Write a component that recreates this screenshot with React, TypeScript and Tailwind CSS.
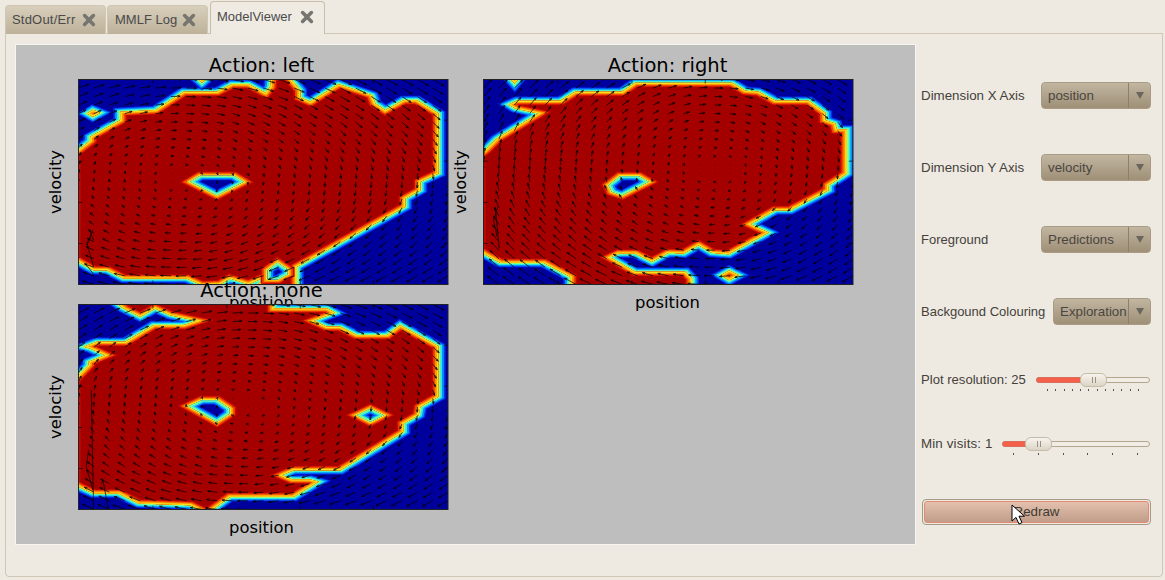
import { useId } from "react"

const BLUE = "#00009c"
const RED = "#a40000"
// colour bands of the jet map, going from the warm side to the cold side of a contour
const warmBands = ["#c80800", "#f04800", "#ff9800", "#f8e020"]
const coldBands = ["#0030f0", "#0090ff", "#30e8e0", "#90ff80"]
// grid cells are wider than tall, so bands get wider on vertical edges
const X_STRETCH = 1.6

function Contour({ points, hole = false }: { points: string; hole?: boolean }) {
  const id = useId()
  const outer = hole ? warmBands : coldBands
  const inner = hole ? coldBands : warmBands
  const widths = [26, 20, 13, 6.5]
  const scaled = points
    .split(" ")
    .map((p) => {
      const [x, y] = p.split(",").map(Number)
      return `${(x / X_STRETCH).toFixed(1)},${y}`
    })
    .join(" ")
  return (
    <g transform={`scale(${X_STRETCH} 1)`}>
      {outer.map((c, i) => (
        <polygon key={c} points={scaled} fill="none" stroke={c} strokeWidth={widths[i]} strokeLinejoin="miter" />
      ))}
      <clipPath id={id}>
        <polygon points={scaled} />
      </clipPath>
      <polygon points={scaled} fill={hole ? BLUE : RED} />
      <g clipPath={`url(#${id})`}>
        {inner.map((c, i) => (
          <polygon key={c} points={scaled} fill="none" stroke={c} strokeWidth={widths[i]} strokeLinejoin="miter" />
        ))}
      </g>
    </g>
  )
}

// quiver field: clockwise swirl around (cx, cy), vertical speed levels off at cap
function quiverPath(cx: number, cy: number, a: number, b: number, cap: number) {
  let d = ""
  for (let i = 0; i < 25; i++) {
    for (let j = 0; j < 25; j++) {
      const x = 25 + i * 46.2
      const y = 28 + j * 25.6
      const vx = -(y - cy) * a
      const vy = cap * Math.tanh(((x - cx) * b) / cap)
      const len = Math.hypot(vx, vy)
      if (len < 3) {
        d += `M${x} ${y}h2`
        continue
      }
      const ux = vx / len
      const uy = vy / len
      const ex = x + vx
      const ey = y + vy
      const hx = ex - ux * 8
      const hy = ey - uy * 8
      d += `M${x.toFixed(1)} ${y.toFixed(1)}L${ex.toFixed(1)} ${ey.toFixed(1)}`
      d += `M${(hx - uy * 3).toFixed(1)} ${(hy + ux * 3).toFixed(1)}L${ex.toFixed(1)} ${ey.toFixed(1)}L${(hx + uy * 3).toFixed(1)} ${(hy - ux * 3).toFixed(1)}`
    }
  }
  return d
}

const xTicks = [248, 470, 690, 910]
const yTicks = [150, 273, 397, 520]

type PlotProps = {
  x: number
  y: number
  title: string
  region: string
  islands: string[]
  holes: string[]
  swirl: [number, number, number, number, number]
  longArrows: string
  shift?: number
  labelX?: number
}

function Plot({ x, y, title, region, islands, holes, swirl, longArrows, shift = 0, labelX = 183 }: PlotProps) {
  const ticks =
    xTicks.map((t) => `M${t} 28v12M${t} 643v-12`).join("") + yTicks.map((t) => `M25 ${t}h12M1133 ${t}h-12`).join("")
  return (
    <g>
      <svg x={x} y={y} width={369.5} height={205} viewBox="25 28 1108 615">
        <rect x="0" y="0" width="1200" height="700" fill={BLUE} />
        <g transform={`translate(0 ${-shift})`}>
          <Contour points={region} />
          {islands.map((p) => (
            <Contour key={p} points={p} />
          ))}
          {holes.map((p) => (
            <Contour key={p} points={p} hole />
          ))}
        </g>
        <path d={quiverPath(...swirl)} stroke="#000" strokeWidth="2.2" fill="none" />
        <g transform={`translate(0 ${-shift})`}>
          <path d={longArrows} stroke="#000" strokeWidth="2.2" fill="none" />
        </g>
        <path d={ticks} stroke="#000" strokeWidth="2" fill="none" />
      </svg>
      <rect x={x} y={y} width={369.5} height={205} fill="none" stroke="#222" strokeWidth="1" />
      <text
        x={x + labelX}
        y={y - 8}
        textAnchor="middle"
        fontSize="19.5"
        fill="#000"
        fontFamily="'DejaVu Sans', sans-serif"
      >
        {title}
      </text>
      <text
        x={x + labelX}
        y={y + 228}
        textAnchor="middle"
        fontSize="16.4"
        fill="#000"
        fontFamily="'DejaVu Sans', sans-serif"
      >
        position
      </text>
    </g>
  )
}

function YLabel({ x, y }: { x: number; y: number }) {
  return (
    <text
      transform={`translate(${x} ${y}) rotate(-90)`}
      textAnchor="middle"
      fontSize="16.4"
      fill="#000"
      fontFamily="'DejaVu Sans', sans-serif"
    >
      velocity
    </text>
  )
}

function CloseIcon() {
  return (
    <svg width="14" height="14" viewBox="0 0 14 14" className="shrink-0">
      <path d="M2.6 2.6 11.4 11.4M11.4 2.6 2.6 11.4" stroke="#77756f" strokeWidth="3.6" strokeLinecap="round" />
    </svg>
  )
}

function Tab({ label, box, active = false }: { label: string; box: string; active?: boolean }) {
  return (
    <div
      className={`flex items-center justify-between rounded-t-[4px] border border-b-0 ${box} ${
        active
          ? "h-[33px] border-[#c9bfa9] bg-[#efebe3] pb-[3px]"
          : "h-[29px] border-[#cfc6b4] bg-gradient-to-b from-[#d8cfbc] to-[#bdb199]"
      }`}
    >
      <span className="text-[13px] text-[#4a4a4a]">{label}</span>
      <CloseIcon />
    </div>
  )
}

function Select({ value, width = "w-[110px]" }: { value: string; width?: string }) {
  return (
    <div
      className={`mb-[1px] flex h-[27px] ${width} items-stretch rounded-[4px] border border-[#a89c87] bg-gradient-to-b from-[#c2b6a1] to-[#9f8f77] text-[13.33px] text-[#4a4640]`}
    >
      <div className="flex flex-1 items-center overflow-hidden whitespace-nowrap pl-[6px]">{value}</div>
      <div className="flex w-[22px] items-center justify-center border-l border-[#8d806b]">
        <svg width="10" height="9" viewBox="0 0 10 9">
          <path d="M1 1h8L5 8z" fill="#6a665c" />
        </svg>
      </div>
    </div>
  )
}

function Row({ label, labelClass = "text-[13.33px]", children }: { label: string; labelClass?: string; children: React.ReactNode }) {
  return (
    <div className="flex h-[72px] items-center justify-between text-[#45413a]">
      <span className={labelClass}>{label}</span>
      {children}
    </div>
  )
}

function Slider({
  label,
  labelClass,
  height,
  width,
  fill,
  thumb,
  ticks,
  tickInset,
}: {
  label: string
  labelClass: string
  height: string
  width: string
  fill: string
  thumb: string
  ticks: number
  tickInset: string
}) {
  return (
    <div className={`flex ${height} items-center justify-between pr-[1px] text-[#45413a]`}>
      <span className={labelClass}>{label}</span>
      <div className={`relative ${width} h-[6px]`}>
        <div className="h-[6px] rounded-[3px] border border-[#b3a78f] bg-[#f1ede4]" />
        <div className={`absolute left-0 top-0 h-[6px] ${fill} rounded-l-[3px] border border-[#d9705a] bg-[#f4604a]`} />
        <div
          className={`absolute top-1/2 ${thumb} flex h-[14px] w-[27px] -translate-y-1/2 items-center justify-center gap-[2px] rounded-[6px] border border-[#c6bba6] bg-gradient-to-b from-[#f7f4ee] to-[#dcd5c6]`}
        >
          <span className="h-[6px] w-px bg-[#9a9181]" />
          <span className="h-[6px] w-px bg-[#9a9181]" />
        </div>
        <div className={`absolute top-[12px] flex ${tickInset} justify-between`}>
          {Array.from({ length: ticks }).map((_, i) => (
            <span key={i} className="h-[2px] w-px bg-[#55514a]" />
          ))}
        </div>
      </div>
    </div>
  )
}

export default function App() {
  return (
    <div className="flex h-[580px] w-[1165px] flex-col overflow-hidden bg-[#eeeae2] font-['Liberation_Sans',sans-serif]">
      {/* Tabs */}
      <div className="z-10 -mb-px flex h-[34px] items-end pl-[5px]">
        <Tab label="StdOut/Err" box="w-[101px] pl-[6px] pr-[9px] tracking-[0.2px]" />
        <Tab label="MMLF Log" box="ml-[1px] w-[101px] pl-[7px] pr-[11px]" />
        <Tab label="ModelViewer" box="ml-[2px] w-[115px] pl-[6px] pr-[10px]" active />
      </div>

      {/* Panel */}
      <div className="mb-[3px] ml-[5px] mr-[2px] flex flex-1 rounded-b-[4px] border border-[#cfc6b4] pl-[10px] pt-[11px]">
        <div className="h-[499px] w-[899px] bg-[#bebebe] outline outline-1 outline-[#f7f5f0]">
          <svg width="899" height="499" className="block">
            <Plot
              x={62.5}
              y={34.5}
              title="Action: left"
              region="10,250 60,212 60,200 150,150 150,125 255,120 340,65 440,65 485,42 535,42 585,68 600,50 603,10 648,10 690,60 690,82 720,95 805,42 905,75 915,100 945,120 1000,90 1040,90 1105,130 1105,310 1050,335 1050,360 1005,385 1005,410 680,590 680,660 545,660 590,618 535,642 480,625 450,642 395,645 350,625 160,625 110,600 70,600 25,575 10,565"
              islands={["50,130 68,119 90,128 68,140", "375,20 395,38 415,20"]}
              holes={["360,335 390,317 490,317 520,335 440,375", "592,600 622,578 652,598 652,612 622,628 592,628"]}
              swirl={[330, 330, 0.11, 0.042, 20]}
              longArrows="M68 480 50 520 70 590M58 480 70 510M50 525 62 500M45 580 70 612"
            />
            <Plot
              x={467.5}
              y={34.5}
              labelX={184}
              title="Action: right"
              region="10,255 30,240 65,205 190,130 120,115 100,103 125,92 255,92 300,65 440,65 480,38 770,38 810,62 850,65 900,92 1000,92 1050,128 1050,150 1080,160 1085,178 1115,178 1115,310 1060,345 1060,360 945,420 900,420 825,462 880,487 760,552 710,548 670,525 625,550 580,548 530,575 480,550 430,550 405,562 480,605 630,605 650,625 650,660 285,660 285,620 205,578 75,578 25,550 10,540"
              islands={["737,615 762,601 790,615 762,630", "100,20 118,40 135,20"]}
              holes={["400,345 435,318 490,318 520,335 440,375 410,365"]}
              swirl={[720, 300, 0.1, 0.05, 32]}
              longArrows="M60 410 72 535M68 410 55 450 66 500"
            />
            <Plot
              x={62.5}
              y={259.5}
              shift={45}
              title="Action: none"
              region="10,300 55,255 55,245 105,225 60,205 40,200 80,185 165,185 250,135 340,135 380,122 300,105 255,85 210,110 160,85 120,55 610,55 610,85 770,85 795,98 730,122 770,140 810,140 860,165 950,165 990,135 1105,198 1105,350 1050,380 1045,405 1000,430 1000,455 810,570 670,570 635,585 665,598 720,598 745,605 670,650 480,650 410,700 360,675 205,670 145,640 70,640 25,620 10,610"
              islands={[]}
              holes={["355,378 395,360 440,360 478,385 478,400 440,425", "860,405 900,386 940,405 900,425"]}
              swirl={[530, 330, 0.11, 0.042, 20]}
              longArrows="M63 330 70 690M55 510 48 560 68 630M98 600 115 690M98 600 94 610"
            />
            <YLabel x={45} y={137} />
            <YLabel x={450} y={137} />
            <YLabel x={45} y={362} />
          </svg>
        </div>

        {/* Controls */}
        <div className="ml-[6px] mr-[11px] flex-1 pt-[15px]">
          <Row label="Dimension X Axis">
            <Select value="position" />
          </Row>
          <Row label="Dimension Y Axis">
            <Select value="velocity" />
          </Row>
          <Row label="Foreground" labelClass="text-[13px]">
            <Select value="Predictions" />
          </Row>
          <Row label="Backgound Colouring" labelClass="text-[13px]">
            <Select value="Exploration" width="w-[98px]" />
          </Row>
          <Slider
            label="Plot resolution: 25"
            labelClass="text-[13.1px]"
            height="h-[63px]"
            width="w-[114px]"
            fill="w-[45px]"
            thumb="left-[44px]"
            ticks={12}
            tickInset="left-[11px] right-[11px]"
          />
          <Slider
            label="Min visits: 1"
            labelClass="text-[13.33px] tracking-[0.15px]"
            height="h-[66px]"
            width="w-[148px]"
            fill="w-[24px]"
            thumb="left-[23px]"
            ticks={6}
            tickInset="left-[11px] right-[12px]"
          />
          <div className="relative mt-[22px] ml-[1px] rounded-[4px] border border-[#a39a88] p-px">
            <div className="flex h-[22px] items-center justify-center rounded-[3px] border border-[#e58a72] bg-gradient-to-b from-[#e3c1ae] to-[#bf9d89] text-[13.33px] text-[#3f3a32]">
              Redraw
            </div>
            <svg width="14" height="21" viewBox="0 0 14 21" className="absolute left-[88px] top-[4px]">
              <path d="M1 1v16l4-3.6 3 6.6 3-1.4-3-6.4h5.5z" fill="#fff" stroke="#000" strokeWidth="1" />
            </svg>
          </div>
        </div>
      </div>
    </div>
  )
}
